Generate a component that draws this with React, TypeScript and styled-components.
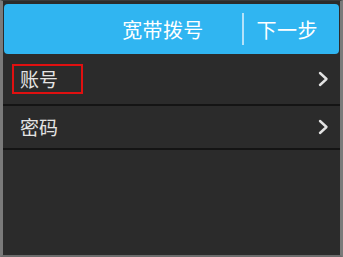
import styled, { createGlobalStyle } from "styled-components";

const Global = createGlobalStyle`
  html, body {
    margin: 0;
    padding: 0;
    background: #2b2b2b;
  }
  body {
    font-family: "Noto Sans CJK SC", "Noto Sans", sans-serif;
  }
`;

const Screen = styled.div`
  box-sizing: border-box;
  width: 343px;
  height: 257px;
  padding-top: 3px;
  background: #2b2b2b;
  border-left: 3px solid #7a7a7a;
  border-right: 3px solid #7a7a7a;
  border-bottom: 2px solid #6c6c6c;
  border-top: 1px solid #3a3a3a;
  display: flex;
  flex-direction: column;
`;

const TopBar = styled.div`
  height: 50px;
  margin: 0 1px 0 1px;
  background: #30b5f1;
  border-radius: 4px;
  display: flex;
  align-items: center;
  justify-content: flex-end;
  padding-right: 21px;
  color: #ffffff;
  font-size: 20px;
`;

const Title = styled.span`
  margin-right: 38px;
  letter-spacing: 0.3px;
`;

const Divider = styled.span`
  width: 2px;
  height: 32px;
  background: #d6eefb;
  opacity: 0.8;
  margin-right: 13px;
`;

const NextBtn = styled.span`
  letter-spacing: 0.5px;
`;

const Row = styled.div<{ $h: number }>`
  height: ${(p) => p.$h}px;
  display: flex;
  align-items: center;
  justify-content: space-between;
  padding: 0 10px 0 9px;
  border-bottom: 2px solid #141414;
  color: #e4e4e4;
  font-size: 19px;
`;

const Label = styled.span<{ $marked?: boolean }>`
  padding: 0 23px 0 6px;
  line-height: 26px;
  border: 2px solid ${(p) => (p.$marked ? "#e01010" : "transparent")};
`;

const Chevron = () => (
  <svg width="14" height="16" viewBox="0 0 14 16">
    <path
      d="M4 2 L10.5 8 L4 14"
      fill="none"
      stroke="#e2e2e2"
      strokeWidth="2.4"
      strokeLinecap="round"
      strokeLinejoin="round"
    />
  </svg>
);

export default function App() {
  return (
    <>
      <Global />
      <Screen>
        <TopBar>
          <Title>宽带拨号</Title>
          <Divider />
          <NextBtn>下一步</NextBtn>
        </TopBar>
        <Row $h={50}>
          <Label $marked>账号</Label>
          <Chevron />
        </Row>
        <Row $h={42}>
          <Label>密码</Label>
          <Chevron />
        </Row>
      </Screen>
    </>
  );
}
